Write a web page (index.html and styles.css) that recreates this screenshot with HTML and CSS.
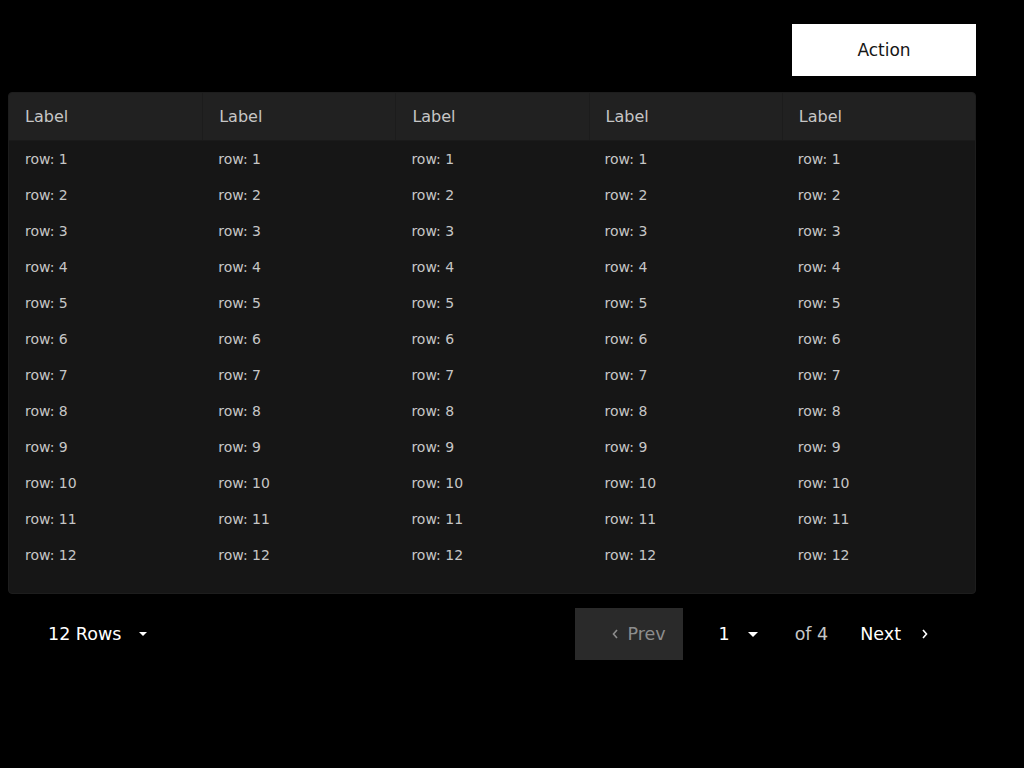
FILE: index.html
```html
<!DOCTYPE html>
<html>
<head>
<meta charset="utf-8">
<link rel="stylesheet" href="styles.css">
</head>
<body>
<div class="page">
  <div class="toolbar">
    <button class="action">Action</button>
  </div>
  <div class="table">
    <div class="thead">
      <div class="th">Label</div>
      <div class="th">Label</div>
      <div class="th">Label</div>
      <div class="th">Label</div>
      <div class="th">Label</div>
    </div>
    <div class="tbody" id="tbody"></div>
  </div>
  <div class="pager">
    <div class="rows">12 Rows <span class="caret small"></span></div>
    <div class="nav">
      <div class="prev"><svg class="chev" width="6" height="10" viewBox="0 0 6 10"><path d="M5 1 L1.5 5 L5 9" fill="none" stroke="currentColor" stroke-width="1.6"/></svg>Prev</div>
      <div class="page-sel">1 <span class="caret"></span></div>
      <div class="of">of 4</div>
      <div class="next">Next<svg class="chev" width="6" height="10" viewBox="0 0 6 10"><path d="M1 1 L4.5 5 L1 9" fill="none" stroke="currentColor" stroke-width="1.6"/></svg></div>
    </div>
  </div>
</div>
<script>
  var tb = document.getElementById('tbody');
  var html = '';
  for (var i = 1; i <= 12; i++) {
    html += '<div class="tr">';
    for (var c = 0; c < 5; c++) html += '<div class="td">row: ' + i + '</div>';
    html += '</div>';
  }
  tb.innerHTML = html;
</script>
</body>
</html>
```

FILE: styles.css
```css
html, body {
  margin: 0;
  padding: 0;
  background: #000;
  font-family: "DejaVu Sans", sans-serif;
}
.page {
  width: 968px;
  padding: 24px 48px 0 8px;
}
.toolbar {
  display: flex;
  justify-content: flex-end;
  margin-bottom: 16px;
}
.action {
  width: 184px;
  height: 52px;
  background: #fff;
  color: #161616;
  border: none;
  font-family: "DejaVu Sans", sans-serif;
  font-size: 17px;
  padding: 0;
  cursor: pointer;
}
.table {
  background: #161616;
  border: 1px solid #1d1d1d;
  border-radius: 4px;
  overflow: hidden;
  padding-bottom: 20px;
}
.thead {
  display: grid;
  grid-template-columns: repeat(5, 1fr);
  background: #212121;
  height: 48px;
  border-bottom: 1px solid #1a1a1a;
  box-sizing: border-box;
}
.th {
  color: #c6c6c6;
  font-size: 16px;
  line-height: 47px;
  padding-left: 16px;
  border-left: 1px solid #1c1c1c;
}
.th:first-child { border-left: none; }
.tr {
  display: grid;
  grid-template-columns: repeat(5, 1fr);
  height: 36px;
}
.td {
  color: #c6c6c6;
  font-size: 14px;
  line-height: 36px;
  padding-left: 16px;
}
.pager {
  display: flex;
  justify-content: space-between;
  align-items: center;
  height: 52px;
  margin-top: 14px;
  font-size: 17.5px;
}
.rows {
  color: #fff;
  padding-left: 40px;
  display: flex;
  align-items: center;
}
.caret {
  display: inline-block;
  width: 0;
  height: 0;
  border-left: 5px solid transparent;
  border-right: 5px solid transparent;
  border-top: 5px solid #fff;
}
.caret.small {
  border-left-width: 4px;
  border-right-width: 4px;
  border-top-width: 4px;
  margin-left: 18px;
}
.nav {
  display: flex;
  align-items: center;
  height: 52px;
  margin-right: 48px;
}
.prev {
  background: #2a2a2a;
  color: #8d8d8d;
  height: 52px;
  width: 108px;
  box-sizing: border-box;
  padding-left: 37px;
  display: flex;
  align-items: center;
}
.prev .chev { margin-right: 10px; }
.page-sel {
  color: #fff;
  padding-left: 36px;
  display: flex;
  align-items: center;
}
.page-sel .caret { margin-left: 18px; }
.of {
  color: #c6c6c6;
  margin-left: 37px;
}
.next {
  color: #fff;
  margin-left: 32px;
  display: flex;
  align-items: center;
}
.next .chev { margin-left: 21px; }
.chev { display: block; }
```
